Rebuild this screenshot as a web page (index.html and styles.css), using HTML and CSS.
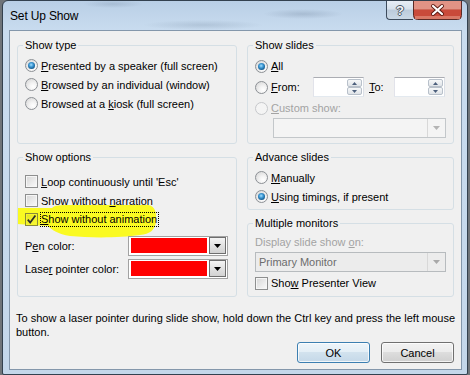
FILE: index.html
```html
<!DOCTYPE html>
<html>
<head>
<meta charset="utf-8">
<title>Set Up Show</title>
<link rel="stylesheet" href="styles.css">
</head>
<body>
<div class="screen">
  <div class="window">
    <div class="titlebar">
      <span class="title">Set Up Show</span>
      <div class="caps">
        <div class="cap help"><span>?</span></div>
        <svg class="xbtn" width="49" height="19" viewBox="0 0 49 19">
          <path d="M0.5 0 V14.5 Q0.5 18.5 4.5 18.5 H44.5 Q48.5 18.5 48.5 14.5 V0 Z" fill="#c94a3a" stroke="#5b2a25"/>
          <rect x="1" y="0" width="47" height="8" fill="#e29385"/>
          <rect x="1" y="8" width="47" height="1" fill="#d06a5a"/>
          <rect x="2" y="15" width="45" height="3" fill="#d97866"/>
          <path d="M20 5 L29 13 M29 5 L20 13" stroke="#5a1a12" stroke-width="4" stroke-linecap="round"/>
          <path d="M20 5 L29 13 M29 5 L20 13" stroke="#ffffff" stroke-width="2.2" stroke-linecap="round"/>
        </svg>
      </div>
    </div>
    <div class="client">
      <div class="columns">
        <div class="col">
          <fieldset class="group g-type">
            <legend>Show type</legend>
            <div class="gbody pt4">
              <div class="opt"><span class="radio on"></span><span><u>P</u>resented by a speaker (full screen)</span></div>
              <div class="opt"><span class="radio"></span><span><u>B</u>rowsed by an individual (window)</span></div>
              <div class="opt"><span class="radio"></span><span>Browsed at a <u>k</u>iosk (full screen)</span></div>
            </div>
          </fieldset>
          <fieldset class="group g-options">
            <legend>Show options</legend>
            <div class="gbody pt8">
              <div class="opt"><span class="check"></span><span><u>L</u>oop continuously until 'Esc'</span></div>
              <div class="opt"><span class="check"></span><span>Show without <u>n</u>arration</span></div>
              <div class="opt hl">
                <svg class="marker" width="142" height="35" viewBox="17 205 142 35"><path d="M17 208 L52 208 C55 205 60 205 70 205 L148 205 C155 206 157 212 156 222 C155 230 150 234 140 235 C120 238 90 238 70 236 C58 234 52 230 48 226 L17 224 Z" fill="#fafa22"/></svg>
                <span class="check marked"><svg width="11" height="11" viewBox="0 0 11 11"><path d="M1.8 5.6 L4.2 8.6 L9.4 1.4" fill="none" stroke="#2b2b2b" stroke-width="1.7"/></svg></span><span class="focus"><u>S</u>how without animation</span>
              </div>
              <div class="colorrow first">
                <span>P<u>e</u>n color:</span>
                <span class="colorpick"><span class="swatch"></span><span class="ddbtn"><svg width="7" height="4" viewBox="0 0 7 4"><path d="M0 0 H7 L3.5 4 Z" fill="#000"/></svg></span></span>
              </div>
              <div class="colorrow">
                <span>Lase<u>r</u> pointer color:</span>
                <span class="colorpick"><span class="swatch"></span><span class="ddbtn"><svg width="7" height="4" viewBox="0 0 7 4"><path d="M0 0 H7 L3.5 4 Z" fill="#000"/></svg></span></span>
              </div>
            </div>
          </fieldset>
        </div>
        <div class="col">
          <fieldset class="group g-slides">
            <legend>Show slides</legend>
            <div class="gbody pt4">
              <div class="opt h20"><span class="radio on"></span><span><u>A</u>ll</span></div>
              <div class="opt h22">
                <span class="radio"></span><span class="from"><u>F</u>rom:</span>
                <span class="spin"><span class="spin-btns"><span><svg width="5" height="3" viewBox="0 0 5 3"><path d="M0 3 H5 L2.5 0 Z" fill="#4c5f7c"/></svg></span><span><svg width="5" height="3" viewBox="0 0 5 3"><path d="M0 0 H5 L2.5 3 Z" fill="#4c5f7c"/></svg></span></span></span>
                <span class="to"><u>T</u>o:</span>
                <span class="spin"><span class="spin-btns"><span><svg width="5" height="3" viewBox="0 0 5 3"><path d="M0 3 H5 L2.5 0 Z" fill="#4c5f7c"/></svg></span><span><svg width="5" height="3" viewBox="0 0 5 3"><path d="M0 0 H5 L2.5 3 Z" fill="#4c5f7c"/></svg></span></span></span>
              </div>
              <div class="opt h20 dis"><span class="radio dis"></span><span><u>C</u>ustom show:</span></div>
              <div class="combo custom"><span class="val"></span><span class="arr"><svg width="7" height="4" viewBox="0 0 7 4"><path d="M0 0 H7 L3.5 4 Z" fill="#b4b4b4"/></svg></span></div>
            </div>
          </fieldset>
          <fieldset class="group g-advance">
            <legend>Advance slides</legend>
            <div class="gbody pt4">
              <div class="opt"><span class="radio"></span><span><u>M</u>anually</span></div>
              <div class="opt"><span class="radio on"></span><span><u>U</u>sing timings, if present</span></div>
            </div>
          </fieldset>
          <fieldset class="group g-monitors">
            <legend>Multiple monitors</legend>
            <div class="gbody pt3">
              <div class="lbl dis"><span>Display slide show <u>o</u>n:</span></div>
              <div class="combo monitor"><span class="val">Primary Monitor</span><span class="arr"><svg width="7" height="4" viewBox="0 0 7 4"><path d="M0 0 H7 L3.5 4 Z" fill="#a8a8a8"/></svg></span></div>
              <div class="opt h18 mt2"><span class="check"></span><span>Sho<u>w</u> Presenter View</span></div>
            </div>
          </fieldset>
        </div>
      </div>
      <p class="hint">To show a laser pointer during slide show, hold down the Ctrl key and press the left mouse<br>button.</p>
      <div class="buttons">
        <button class="btn default">OK</button>
        <button class="btn">Cancel</button>
      </div>
    </div>
  </div>
</div>
</body>
</html>
```

FILE: styles.css
```css
* { box-sizing: border-box; }
html, body { margin: 0; padding: 0; }
body {
  width: 470px;
  height: 375px;
  overflow: hidden;
  background: #6f7479;
  font-family: "Liberation Sans", Arial, sans-serif;
  font-size: 11px;
  color: #000;
}
.screen {
  width: 470px;
  height: 375px;
  padding-left: 2px;
}
.window {
  width: 466px;
  height: 375px;
  border: 1px solid #33414f;
  border-radius: 6px 6px 2px 2px;
  padding: 0 5px 4px 6px;
  display: flex;
  flex-direction: column;
  background:
    radial-gradient(ellipse 40px 5px at 300px 13px, rgba(80,100,125,.22), transparent),
    radial-gradient(ellipse 60px 5px at 200px 24px, rgba(80,100,125,.18), transparent),
    radial-gradient(ellipse 30px 4px at 110px 3px, rgba(80,100,125,.18), transparent),
    linear-gradient(180deg, #b9cfe6 0, #c9dcef 30px, #c4d7ea 100%);
}
.titlebar {
  height: 29px;
  display: flex;
  align-items: flex-start;
  padding-left: 1px;
}
.title {
  margin-top: 8px;
  font-size: 12px;
  line-height: 15px;
  letter-spacing: -0.15px;
}
.caps {
  margin-left: auto;
  display: flex;
  height: 19px;
}
.cap {
  height: 19px;
  display: flex;
  border-style: solid;
  border-color: #3d4b5c;
  border-width: 0 0 1px 1px;
}
.help {
  width: 27px;
  border-radius: 0 0 0 4px;
  align-items: center;
  justify-content: center;
  background: linear-gradient(#e7eef6 0, #d6e1ec 45%, #bccbdb 50%, #cad8e6 100%);
}
.help span {
  color: #f4f6f8;
  font-weight: bold;
  font-size: 13px;
  line-height: 13px;
  text-shadow: 1px 0 0 #4a5563, -1px 0 0 #4a5563, 0 1px 0 #4a5563, 0 -1px 0 #4a5563;
}
.xbtn {
  display: block;
  flex: none;
}
.client {
  position: relative;
  z-index: 0;
  height: 340px;
  border: 1px solid #8497ab;
  background: #f0f0f0;
  padding: 7px 7px 6px 7px;
  display: flex;
  flex-direction: column;
}
.columns {
  display: grid;
  grid-template-columns: 220px 207px;
  column-gap: 10px;
}
.col {
  display: flex;
  flex-direction: column;
  gap: 6px;
}
.group {
  margin: 0;
  padding: 0 7px;
  min-width: 0;
  border: 1px solid #d5dfe5;
  border-radius: 3px;
}
.group legend {
  padding: 0 2px;
  margin-left: -2px;
  line-height: 14px;
}
.g-type, .g-slides { height: 106px; }
.g-options { height: 147px; }
.g-advance { height: 60px; }
.g-monitors { height: 81px; }
.gbody { display: flex; flex-direction: column; }
.pt3 { padding-top: 3px; }
.pt4 { padding-top: 4px; }
.pt8 { padding-top: 8px; }
.opt {
  display: flex;
  align-items: center;
  height: 19px;
  white-space: nowrap;
}
.opt.hl { position: relative; }
.marker {
  position: absolute;
  left: -8px;
  top: -5px;
  z-index: -1;
  pointer-events: none;
}
.h18 { height: 18px; }
.h20 { height: 20px; }
.h22 { height: 22px; }
.mt2 { margin-top: 2px; }
.dis { color: #a3a3a3; }
.radio {
  flex: none;
  position: relative;
  width: 13px;
  height: 13px;
  margin-right: 3px;
  border-radius: 50%;
  border: 1px solid #8c9095;
  background: radial-gradient(circle at 65% 70%, #ffffff 0, #f3f3f3 35%, #d2d2d2 100%);
}
.radio.on::after {
  content: "";
  position: absolute;
  left: 2px;
  top: 2px;
  width: 7px;
  height: 7px;
  border-radius: 50%;
  background: radial-gradient(circle at 45% 40%, #a6e0ff 0, #3f9ad6 35%, #175e92 70%, #0d3a5f 100%);
}
.radio.dis {
  border-color: #c6c8cb;
  background: #f4f4f4;
}
.check {
  flex: none;
  width: 13px;
  height: 13px;
  margin-right: 3px;
  border: 1px solid #8e8f8f;
  background: linear-gradient(135deg, #d6d6d6, #fbfbfb);
  box-shadow: inset 0 0 0 1px #f6f6f6;
  display: flex;
  align-items: center;
  justify-content: center;
}
.check.marked {
  border-color: #8a8a3a;
  background: linear-gradient(135deg, #e4e41c, #fafa3a);
  box-shadow: inset 0 0 0 1px #f6f62a;
}
.check svg { display: block; }
.focus {
  outline: 1px dotted #000;
  line-height: 13px;
  padding-right: 1px;
}
.colorrow {
  display: grid;
  grid-template-columns: 103px 100px;
  align-items: center;
  height: 20px;
  margin-top: 3px;
}
.colorrow.first { margin-top: 7px; }
.colorpick {
  display: flex;
  height: 20px;
  border: 1px solid #a2a2a2;
  background: #fff;
  padding: 0 1px 1px 2px;
  gap: 2px;
}
.swatch {
  flex: 1;
  margin: 1px 0;
  background: #ff0000;
}
.ddbtn {
  width: 17px;
  border: 1px solid #6e6e6e;
  background: linear-gradient(#f4f4f4, #e2e2e2 50%, #d2d2d2);
  display: flex;
  align-items: center;
  justify-content: center;
}
.from { width: 42px; }
.to { width: 25px; margin-left: 5px; }
.spin {
  width: 51px;
  height: 20px;
  display: flex;
  justify-content: flex-end;
  padding: 1px 1px 1px 0;
  border: 1px solid;
  border-color: #abadb3 #dbdfe6 #e3e9ef #e2e3ea;
  background: #fff;
}
.spin-btns {
  width: 15px;
  display: flex;
  flex-direction: column;
}
.spin-btns span {
  flex: 1;
  border: 1px solid #b8c0ca;
  border-radius: 2px;
  background: linear-gradient(#f7f8f9, #dfe3e8);
  display: flex;
  align-items: center;
  justify-content: center;
}
.combo {
  display: flex;
  height: 20px;
  border: 1px solid #c3c7ca;
  background: #f4f4f4;
  color: #6d6d6d;
}
.combo.custom {
  margin-left: 18px;
  width: 173px;
}
.combo.monitor {
  margin-top: 1px;
  border-color: #b7bbbe;
  background: #ececec;
}
.combo .val {
  flex: 1;
  padding-left: 3px;
  display: flex;
  align-items: center;
}
.combo .arr {
  width: 18px;
  border-left: 1px solid #d8d8d8;
  display: flex;
  align-items: center;
  justify-content: center;
}
.lbl {
  height: 18px;
  display: flex;
  align-items: center;
}
.hint {
  margin: 14px 0 0 -1px;
  line-height: 14px;
  white-space: nowrap;
}
.buttons {
  margin-top: 3px;
  display: flex;
  justify-content: flex-end;
  gap: 11px;
}
.btn {
  width: 73px;
  height: 21px;
  padding: 0;
  border: 1px solid #707070;
  border-radius: 3px;
  background: linear-gradient(#f2f2f2 0, #ebebeb 50%, #dddddd 50%, #cfcfcf 100%);
  box-shadow: inset 0 0 0 1px rgba(255,255,255,.75);
  font-family: inherit;
  font-size: 11px;
  color: #000;
}
.btn.default {
  border-color: #3c7fb1;
  background: linear-gradient(#eef5fa 0, #e3eef6 50%, #d2e2ee 50%, #c4d8e8 100%);
}
```
